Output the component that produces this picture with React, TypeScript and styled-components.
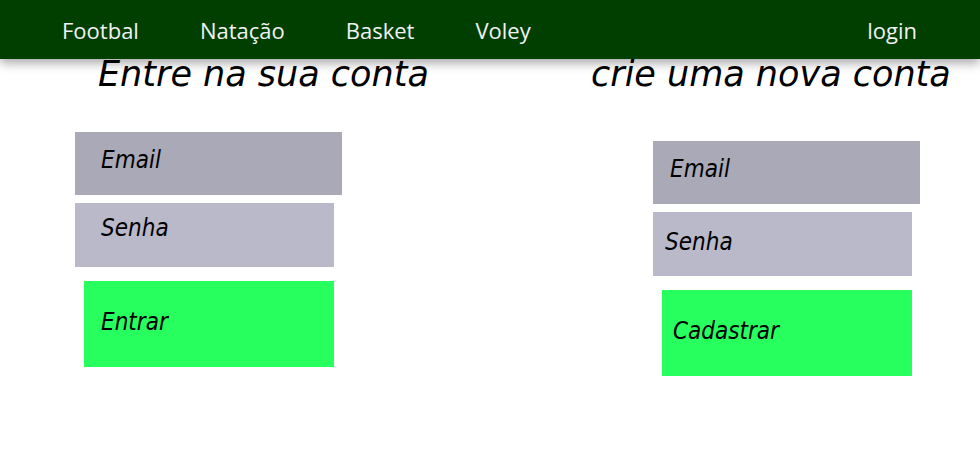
import styled, { createGlobalStyle } from "styled-components";

const GlobalStyle = createGlobalStyle`
  html, body {
    margin: 0;
    padding: 0;
    background: #ffffff;
  }
  body {
    font-family: "DejaVu Sans", sans-serif;
  }
`;

const TopBar = styled.nav`
  position: relative;
  z-index: 2;
  display: flex;
  align-items: center;
  gap: 61px;
  height: 59px;
  padding: 0 63px 0 62px;
  background: #003f00;
  box-shadow: 0 4px 10px rgba(0, 0, 0, 0.35);
  box-sizing: border-box;
`;

const NavLink = styled.a<{ $push?: boolean }>`
  font-family: "Open Sans", "Noto Sans", sans-serif;
  font-size: 22px;
  color: #f2f2f2;
  text-decoration: none;
  cursor: pointer;
  margin-left: ${({ $push }) => ($push ? "auto" : "0")};
`;

const Main = styled.main`
  display: grid;
  grid-template-columns: 516px 1fr;
  padding-left: 75px;
`;

const Column = styled.section`
  display: flex;
  flex-direction: column;
  align-items: flex-start;
`;

const Title = styled.h1<{ $indent: number }>`
  margin: 0 0 0 ${({ $indent }) => $indent}px;
  font-family: "DejaVu Sans", sans-serif;
  font-size: 35px;
  font-weight: normal;
  font-style: italic;
  line-height: 30px;
  color: #000;
  white-space: nowrap;
`;

const Form = styled.form<{ $top: number; $indent: number }>`
  display: flex;
  flex-direction: column;
  align-items: flex-start;
  margin: ${({ $top }) => $top}px 0 0 ${({ $indent }) => $indent}px;
`;

const formFont = `
  font-family: "DejaVu Sans Condensed", "DejaVu Sans", sans-serif;
  font-stretch: condensed;
  font-size: 24px;
  font-style: italic;
  color: #000;
`;

const Field = styled.input<{ $tone: "dark" | "light"; $width: number; $height: number; $padLeft: number; $lift: number }>`
  ${formFont}
  display: block;
  width: ${({ $width }) => $width}px;
  height: ${({ $height }) => $height}px;
  padding: 0 0 ${({ $lift }) => $lift}px ${({ $padLeft }) => $padLeft}px;
  margin: 0;
  border: none;
  outline: none;
  box-sizing: border-box;
  background: ${({ $tone }) => ($tone === "dark" ? "#a9a9b7" : "#b9b9ca")};

  &::placeholder {
    color: #000;
    opacity: 1;
  }
`;

const Submit = styled.button<{ $padLeft: number }>`
  ${formFont}
  display: flex;
  align-items: center;
  width: 250px;
  height: 86px;
  margin: 14px 0 0 9px;
  padding: 0 0 4px ${({ $padLeft }) => $padLeft}px;
  border: none;
  background: #26ff5e;
  box-sizing: border-box;
  cursor: pointer;
`;

const Spacer = styled.div`
  height: 8px;
`;

export default function App() {
  return (
    <>
      <GlobalStyle />
      <TopBar>
        <NavLink>Footbal</NavLink>
        <NavLink>Natação</NavLink>
        <NavLink>Basket</NavLink>
        <NavLink>Voley</NavLink>
        <NavLink $push>login</NavLink>
      </TopBar>
      <Main>
        <Column>
          <Title $indent={23}>Entre na sua conta</Title>
          <Form $top={43} $indent={0} onSubmit={(e) => e.preventDefault()}>
            <Field $tone="dark" $width={267} $height={63} $padLeft={26} $lift={7} placeholder="Email" />
            <Spacer />
            <Field $tone="light" $width={259} $height={64} $padLeft={26} $lift={14} type="password" placeholder="Senha" />
            <Submit $padLeft={17}>Entrar</Submit>
          </Form>
        </Column>
        <Column>
          <Title $indent={0}>crie uma nova conta</Title>
          <Form $top={52} $indent={62} onSubmit={(e) => e.preventDefault()}>
            <Field $tone="dark" $width={267} $height={63} $padLeft={17} $lift={7} placeholder="Email" />
            <Spacer />
            <Field $tone="light" $width={259} $height={64} $padLeft={12} $lift={4} type="password" placeholder="Senha" />
            <Submit $padLeft={11}>Cadastrar</Submit>
          </Form>
        </Column>
      </Main>
    </>
  );
}
